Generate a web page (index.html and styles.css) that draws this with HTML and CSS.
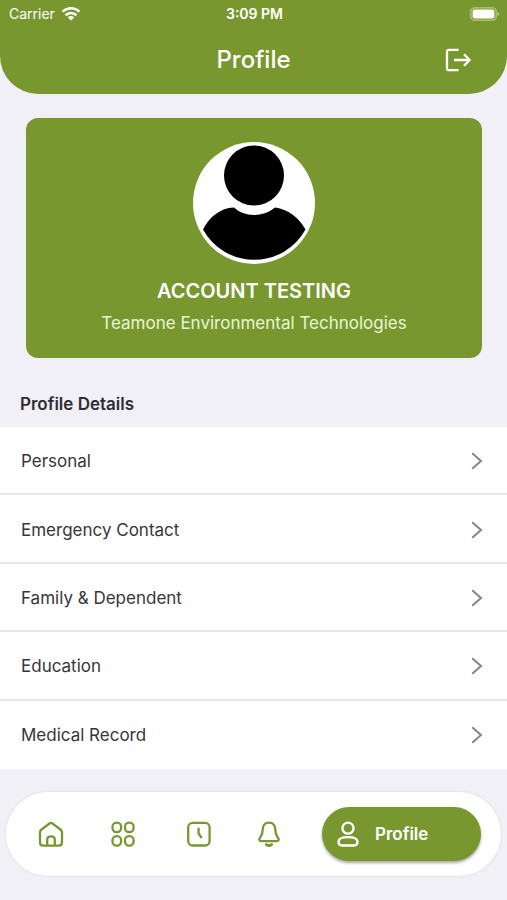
FILE: index.html
```html
<!DOCTYPE html>
<html lang="en">
<head>
<meta charset="utf-8">
<meta name="viewport" content="width=device-width, initial-scale=1">
<title>Profile</title>
<link rel="stylesheet" href="styles.css">
</head>
<body>
<header class="header">
  <div class="status">
    <span class="carrier">Carrier
      <svg width="20" height="14" viewBox="0 0 20 14" fill="none" stroke="#fff" stroke-width="2.6" aria-hidden="true"><path d="M1.5 4.6a12.4 12.4 0 0 1 17 0"/><path d="M4.6 8.2a7.8 7.8 0 0 1 10.8 0"/><path d="M10 13.6L6.800 10.4a4.600 4.600 0 0 1 6.400 0z" fill="#fff" stroke="none"/></svg>
    </span>
    <span class="time">3:09 PM</span>
    <svg class="battery" width="30" height="14" viewBox="0 0 30 14" aria-hidden="true"><rect x=".8" y=".8" width="25.4" height="12.4" rx="3.6" fill="none" stroke="#b5cb83" stroke-width="1.3"/><rect x="2.6" y="2.6" width="21.8" height="8.8" rx="2" fill="#fff"/><path d="M27.6 4.8v4.4c1-.5 1.7-1.2 1.7-2.2s-.7-1.7-1.7-2.2z" fill="#b5cb83"/></svg>
  </div>
  <div class="titlebar">
    <h1>Profile</h1>
    <button class="logout" type="button" aria-label="Log out">
      <svg width="26" height="24" viewBox="0 0 26 24" fill="none" stroke="#fff" stroke-width="2.3" stroke-linejoin="round"><path d="M13.5 1.8H4Q2 1.8 2 3.8V20.2Q2 22.2 4 22.2H13.5"/><path d="M9 12H24.5M19 6.3L24.7 12L19 17.7"/></svg>
    </button>
  </div>
</header>

<main>
  <section class="card">
    <svg class="avatar" width="122" height="122" viewBox="0 0 122 122" role="img" aria-label="Profile photo"><circle cx="61" cy="61" r="61" fill="#fff"/><circle cx="61" cy="33.5" r="30"/><path d="M41 65.5Q49 73 61 73T82 65.5C96 67.5 106 76 112.500 87.500A58.500 58.500 0 0 1 10 87.500C16 76 26 66 41 65.5z"/></svg>
    <h2>ACCOUNT TESTING</h2>
    <p>Teamone Environmental Technologies</p>
  </section>

  <h3 class="section-title">Profile Details</h3>
  <ul class="list">
    <li><a href="#personal">Personal<svg class="chevron" viewBox="0 0 12 18"><path d="M1.200 1.200L10 9L1.200 16.800"/></svg></a></li>
    <li><a href="#emergency">Emergency Contact<svg class="chevron" viewBox="0 0 12 18"><path d="M1.200 1.200L10 9L1.200 16.800"/></svg></a></li>
    <li><a href="#family">Family &amp; Dependent<svg class="chevron" viewBox="0 0 12 18"><path d="M1.200 1.200L10 9L1.200 16.800"/></svg></a></li>
    <li><a href="#education">Education<svg class="chevron" viewBox="0 0 12 18"><path d="M1.200 1.200L10 9L1.200 16.800"/></svg></a></li>
    <li><a href="#medical">Medical Record<svg class="chevron" viewBox="0 0 12 18"><path d="M1.200 1.200L10 9L1.200 16.800"/></svg></a></li>
  </ul>
</main>

<nav class="tabs" aria-label="Main">
  <a href="#home" aria-label="Home"><svg viewBox="0 0 26 26"><path d="M2 11.500Q2 9.600 3.500 8.500L11.500 2.500Q13 1.400 14.500 2.500L22.500 8.500Q24 9.600 24 11.500V21.200Q24 24.600 20.600 24.600H5.400Q2 24.600 2 21.200zM9.200 24.400V18.500Q9.200 15.400 13 15.400T16.800 18.500V24.400"/></svg></a>
  <a href="#apps" aria-label="Apps"><svg viewBox="0 0 26 26"><rect x="2.500" y="1.700" width="8.600" height="9.400" rx="4"/><rect x="15" y="1.700" width="8.600" height="9.400" rx="4"/><rect x="2.500" y="15.200" width="8.600" height="9.400" rx="4"/><rect x="15" y="15.200" width="8.600" height="9.400" rx="4"/></svg></a>
  <a href="#time" aria-label="Time"><svg viewBox="0 0 26 26"><rect x="2.200" y="1.900" width="21.400" height="22.600" rx="4.500"/><path d="M12.600 7.600V12.700L15.300 16.200"/></svg></a>
  <a href="#alerts" aria-label="Notifications"><svg viewBox="0 0 26 26"><path d="M13 1.700C8.700 1.700 6.700 4.800 6.700 8.500C6.700 13.500 5.800 14.300 3.900 16.900C2.700 18.600 3.200 20.200 5.400 20.200H20.600C22.800 20.200 23.300 18.600 22.100 16.900C20.200 14.300 19.300 13.500 19.300 8.500C19.300 4.800 17.300 1.700 13 1.700z"/><path d="M10.400 23.600Q13 25.400 15.600 23.600" stroke-width="2.800"/></svg></a>
  <a class="active" href="#profile" aria-current="page"><svg viewBox="0 0 26 26"><circle cx="13" cy="7.200" r="5.500"/><path d="M3.500 20.800C3.500 17.800 7.500 16.200 13 16.200S22.500 17.800 22.500 20.800Q22.500 24.500 19 24.500H7Q3.500 24.500 3.500 20.800z"/></svg>Profile</a>
</nav>
</body>
</html>
```
FILE: styles.css
```css
* { box-sizing: border-box; }

body {
  margin: 0;
  min-height: 100vh;
  background: #f1f0f6;
  color: #36363a;
  font-family: Inter, "Liberation Sans", sans-serif;
  font-size: 17px;
  line-height: 24px;
}

h1, h2, h3, p, ul { margin: 0; padding: 0; }

svg { display: block; flex: none; }

a { color: inherit; text-decoration: none; }

.header {
  padding-bottom: 16px;
  background: #78982f;
  color: #fff;
  border-radius: 0 0 38px 38px;
}

.status,
.titlebar {
  display: grid;
  grid-template-columns: 1fr auto 1fr;
  align-items: center;
}

.status {
  height: 28px;
  padding: 0 7px 0 9px;
  font-size: 14px;
}

.carrier {
  display: flex;
  align-items: center;
  gap: 6px;
}

.time { font-weight: 600; }

.battery { justify-self: end; }

.titlebar {
  padding: 14px 36px 0;
  height: 50px;
}

.titlebar h1 {
  grid-column: 2;
  font-size: 24px;
  line-height: 32px;
  font-weight: 500;
}

.logout {
  justify-self: end;
  padding: 0;
  border: 0;
  background: none;
}

.card {
  display: flex;
  flex-direction: column;
  align-items: center;
  margin: 24px 25px 0 26px;
  padding: 24px 16px 23px;
  border-radius: 12px;
  background: #78982f;
  color: #fff;
  text-align: center;
}

.card h2 {
  margin-top: 15px;
  font-size: 20px;
  line-height: 24px;
  font-weight: 600;
}

.card p {
  margin-top: 8px;
  color: #eaf5d3;
}

.section-title {
  padding: 34px 20px 11px;
  font-size: 17px;
  font-weight: 600;
  color: #2d2d33;
}

.list {
  display: grid;
  grid-auto-rows: 1fr;
  min-height: 38vh;
  background: #fff;
  list-style: none;
}

.list a {
  display: flex;
  align-items: center;
  justify-content: space-between;
  height: 100%;
  min-height: 56px;
  padding: 2px 24px 0 21px;
  border-bottom: 2px solid #e7e7e9;
}

.list li:last-child a { border-bottom-color: #fff; }

.chevron {
  width: 12px;
  height: 18px;
  fill: none;
  stroke: #858585;
  stroke-width: 2;
}

.tabs {
  display: grid;
  grid-template-columns: 70fr 73fr 80fr 60fr 182fr;
  align-items: center;
  margin: 23px 6px;
  padding: 15px 20px 15px 10px;
  border-radius: 42px;
  background: #fff;
  box-shadow: 0 0 3px rgba(0, 0, 0, 0.1);
  color: #78982f;
}

.tabs a {
  display: flex;
  justify-content: center;
}

.tabs svg {
  width: 26px;
  height: 26px;
  fill: none;
  stroke: currentColor;
  stroke-width: 2.3;
  stroke-linecap: round;
  stroke-linejoin: round;
}

.tabs .active {
  justify-content: flex-start;
  align-items: center;
  gap: 14px;
  height: 54px;
  margin-left: 23px;
  padding-left: 13px;
  border-radius: 27px;
  background: #78982f;
  box-shadow: 0 2px 3px rgba(0, 0, 0, 0.35);
  color: #fff;
  font-weight: 600;
}
```
